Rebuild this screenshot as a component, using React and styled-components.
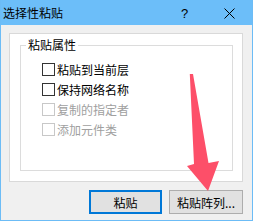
import React from "react";
import styled, { createGlobalStyle } from "styled-components";

const Global = createGlobalStyle`
  html, body { margin: 0; padding: 0; background: #f0f0f0; }
  * { box-sizing: border-box; }
  body { font-family: "Noto Sans CJK SC", "Noto Sans", sans-serif; font-size: 12px; color: #000; }
`;

const Window = styled.div`
  position: relative;
  width: 253px;
  height: 221px;
  background: #f0f0f0;
  border: 1px solid #6cbcf6;
  border-top: none;
  display: flex;
  flex-direction: column;
  overflow: hidden;
`;

const TitleBar = styled.div`
  height: 25px;
  background: #6cbef9;
  display: flex;
  align-items: center;
  padding-left: 2px;
  flex-shrink: 0;
`;

const Title = styled.div`
  flex: 1;
  font-size: 12px;
  line-height: 12px;
  color: #000;
  margin-top: 1px;
`;

const Help = styled.div`
  width: 12px;
  font-family: "Liberation Sans", sans-serif;
  font-size: 13px;
  margin-right: 31px;
  margin-top: 1px;
`;

const CloseIcon = styled.svg`
  width: 11px;
  height: 11px;
  margin-right: 17px;
  margin-top: 1px;
`;

const Body = styled.div`
  padding: 8px 9px 0 8px;
  display: flex;
  flex-direction: column;
`;

const Page = styled.div`
  width: 234px;
  height: 149px;
  background: #fff;
  border: 1px solid #d9d9d9;
  padding: 11px 0 0 10px;
`;

const Group = styled.div`
  position: relative;
  width: 213px;
  height: 126px;
  border: 1px solid #dcdcdc;
  padding: 17px 0 0 21px;
  display: flex;
  flex-direction: column;
  gap: 7px;
`;

const Legend = styled.div`
  position: absolute;
  top: -8px;
  left: 5px;
  padding: 0 2px;
  background: #fff;
  line-height: 14px;
  font-size: 12px;
`;

const Row = styled.div`
  display: flex;
  align-items: center;
  height: 13px;
  gap: 2px;
  color: ${(p) => (p.$disabled ? "#a0a0a0" : "#000")};
`;

const Box = styled.span`
  width: 13px;
  height: 13px;
  border: 1px solid ${(p) => (p.$disabled ? "#c8c8c8" : "#333")};
  background: #fff;
  flex-shrink: 0;
`;

const Label = styled.span`
  font-size: 12px;
  line-height: 13px;
`;

const Buttons = styled.div`
  display: flex;
  justify-content: flex-end;
  gap: 7px;
  margin-top: 8px;
  width: 234px;
`;

const Button = styled.div`
  width: ${(p) => p.$w}px;
  height: 24px;
  background: #e1e1e1;
  border: ${(p) => (p.$default ? "2px solid #0078d7" : "1px solid #adadad")};
  display: flex;
  align-items: center;
  justify-content: center;
  font-size: 12px;
`;

const Arrow = styled.svg`
  position: absolute;
  left: 0;
  top: 0;
  pointer-events: none;
`;

const items = [
  { text: "粘贴到当前层", disabled: false },
  { text: "保持网络名称", disabled: false },
  { text: "复制的指定者", disabled: true },
  { text: "添加元件类", disabled: true },
];

export default function App() {
  return (
    <>
      <Global />
      <Window>
        <TitleBar>
          <Title>选择性粘贴</Title>
          <Help>?</Help>
          <CloseIcon viewBox="0 0 11 11">
            <path d="M0.5 0.5 L10.5 10.5 M10.5 0.5 L0.5 10.5" stroke="#000" strokeWidth="1" fill="none" />
          </CloseIcon>
        </TitleBar>
        <Body>
          <Page>
            <Group>
              <Legend>粘贴属性</Legend>
              {items.map((it) => (
                <Row key={it.text} $disabled={it.disabled}>
                  <Box $disabled={it.disabled} />
                  <Label>{it.text}</Label>
                </Row>
              ))}
            </Group>
          </Page>
          <Buttons>
            <Button $w={73} $default>粘贴</Button>
            <Button $w={74}>粘贴阵列...</Button>
          </Buttons>
        </Body>
        <Arrow width="253" height="221" viewBox="0 0 253 221">
          <polygon
            points="188.8,74 193,164 186,166 207,191 218,161 207.5,163 192,74"
            fill="#fd4f69"
          />
        </Arrow>
      </Window>
    </>
  );
}
